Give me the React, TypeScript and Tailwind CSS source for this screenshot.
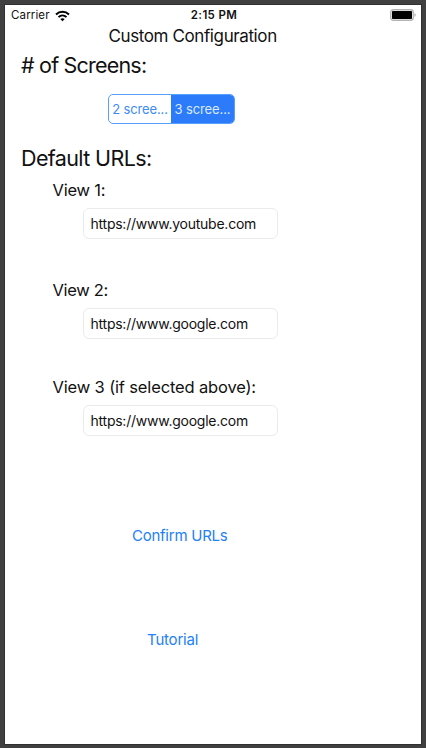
import React from "react";

type FieldProps = { label: string; url: string; tracking: string };

function UrlField({ label, url, tracking }: FieldProps) {
  return (
    <label className="flex flex-col items-start gap-2">
      <span className={`ml-[47.5px] whitespace-nowrap text-[16.5px] leading-5 ${tracking}`}>{label}</span>
      <span className="ml-[78px] flex h-[31px] w-[195px] items-center whitespace-nowrap rounded-[6px] border border-[#ebebeb] px-[6.5px] pb-px text-[14px] tracking-[-0.24px]">
        {url}
      </span>
    </label>
  );
}

function WifiIcon() {
  return (
    <svg className="ml-[5px] mt-px" width="15" height="12" viewBox="0 0 15 12" fill="none" stroke="#000" strokeWidth="2">
      <path d="M1 4.5C4.7.9 10.3.9 14 4.5" />
      <path d="M3.5 7.1c2.3-2.2 5.7-2.2 8 0" />
      <path d="m7.5 11.3-2.2-2.2c1.3-1.1 3.1-1.1 4.4 0z" fill="#000" stroke="none" />
    </svg>
  );
}

function BatteryIcon() {
  return (
    <svg className="-mt-px" width="26" height="12" viewBox="0 0 26 12">
      <rect x="0.75" y="0.75" width="22.5" height="10.5" rx="2.5" fill="#fff" stroke="#b4b4b4" strokeWidth="1.3" />
      <rect x="2" y="2" width="20" height="8" rx="0.8" fill="#000" />
      <path d="M24.5 4.2c1.6.5 1.6 3.1 0 3.6z" fill="#a8a8a8" />
    </svg>
  );
}

export default function App() {
  return (
    <div className="h-[748px] w-[426px] overflow-hidden bg-[#404040] pb-1 pl-[5px] pr-[5px] pt-[5px] font-[Inter,sans-serif] text-[#111]">
      <main className="flex h-[739px] w-full flex-col bg-white shadow-[0_0_0_1px_#303030]">
        <header className="grid h-[21px] grid-cols-3 items-center pl-[6px] pr-[5px] text-[11.5px]">
          <div className="flex items-center"><span className="mt-px tracking-[0.14px]">Carrier</span><WifiIcon /></div>
          <time className="pl-px pt-px text-center text-[11.5px] font-semibold tracking-[0.35px]">2:15 PM</time>
          <div className="flex justify-end"><BatteryIcon /></div>
        </header>
        <h1 className="ml-[103.5px] whitespace-nowrap text-[17px] leading-5 tracking-[-0.39px]">Custom Configuration</h1>
        <h2 className="ml-4 mt-[5px] text-[21.5px] leading-7 tracking-[-0.8px]"># of Screens:</h2>
        <div className="ml-[103px] mt-[15px] flex h-[30px] w-[127px] shrink-0 overflow-hidden rounded-[5px] border border-[#57a0ff] text-[13px] text-[#3d8cf5]">
          <button className="w-[62px] whitespace-nowrap pt-px tracking-[-0.12px]">2 scree...</button>
          <button className="flex-1 whitespace-nowrap bg-[#2c7bfb] pt-px tracking-[-0.12px] text-[#d9eaff]">3 scree...</button>
        </div>
        <h2 className="ml-4 mt-5 text-[21.5px] leading-7 tracking-[-0.62px]">Default URLs:</h2>
        <section className="mt-2 flex flex-col">
          <UrlField label="View 1:" url="https://www.youtube.com" tracking="tracking-[-0.2px]" />
          <div className="mt-[41px]"><UrlField label="View 2:" url="https://www.google.com" tracking="tracking-[-0.3px]" /></div>
          <div className="mt-[38px]"><UrlField label="View 3 (if selected above):" url="https://www.google.com" tracking="tracking-[-0.15px]" /></div>
        </section>
        <button className="ml-[127px] mt-[90px] self-start whitespace-nowrap text-[15px] leading-5 tracking-[-0.25px] text-[#2380fa]">Confirm URLs</button>
        <button className="ml-[142px] mt-[84px] self-start whitespace-nowrap text-[15px] leading-5 tracking-[-0.2px] text-[#2380fa]">Tutorial</button>
      </main>
    </div>
  );
}
